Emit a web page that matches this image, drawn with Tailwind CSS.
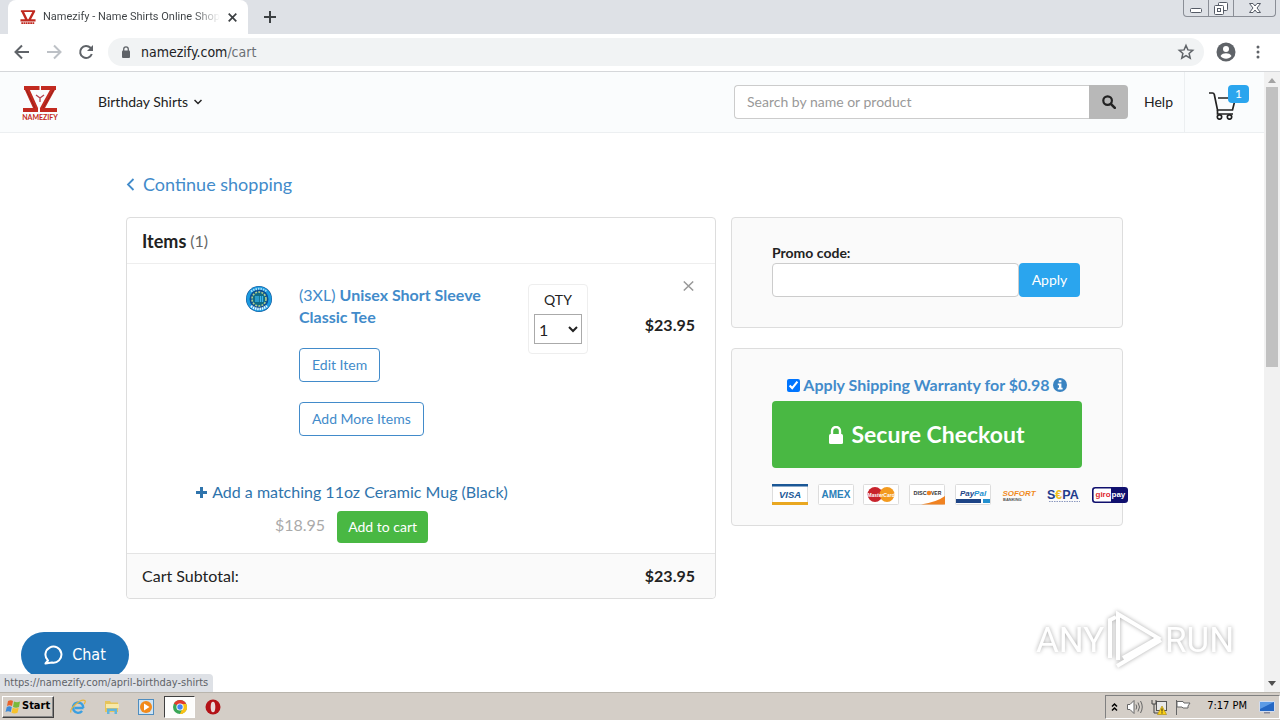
<!DOCTYPE html>
<html lang="en">
<head>
<meta charset="utf-8">
<meta name="viewport" content="width=device-width, initial-scale=1">
<title>Namezify - Name Shirts Online Shopping</title>
<script src="https://cdn.jsdelivr.net/npm/@tailwindcss/browser@4"></script>
</head>
<body class="flex h-screen flex-col overflow-hidden bg-white font-['Lato','Liberation_Sans',sans-serif] text-[#222]">

<!-- Tab strip -->
<div class="flex h-[34px] shrink-0 items-start justify-between bg-[#dee1e6]">
  <div class="flex h-full items-center pl-2">
    <div class="flex h-full w-60 items-center rounded-t-lg bg-white pr-2 pl-3">
      <svg class="h-4 w-4 shrink-0" viewBox="0 0 36 36"><path d="M2 3h32v4H2zM3 6h6l9 19h-6zM28 6h6L24 25h-6zM1 23h34v5H1z" fill="#c0281f"/><path d="M3 32h30" stroke="#c0281f" stroke-width="4" stroke-dasharray="4 1"/></svg>
      <span class="ml-[7px] flex-1 overflow-hidden bg-linear-to-r from-[#3c4043] from-85% to-transparent bg-clip-text font-[Roboto,sans-serif] text-[11px] whitespace-nowrap text-transparent">Namezify - Name Shirts Online Shopping</span>
      <button aria-label="Close tab" class="ml-1 flex h-4 w-4 items-center justify-center"><svg class="h-[9px] w-[9px]" viewBox="0 0 9 9" stroke="#3c4043" stroke-width="1.7"><path d="M.7.7l7.6 7.6M8.3.7L.7 8.3"/></svg></button>
    </div>
    <button aria-label="New tab" class="ml-4 flex h-4 w-3 items-center"><svg class="h-3 w-3" viewBox="0 0 12 12" stroke="#3c4043" stroke-width="2"><path d="M6 0v12M0 6h12"/></svg></button>
  </div>
  <div class="mr-1 flex h-[17px] overflow-hidden rounded-b border border-t-0 border-[#8a8e96]">
    <button aria-label="Minimize" class="flex w-[25px] items-center justify-center border-r border-[#8a8e96]"><svg class="h-4 w-4" viewBox="0 0 16 16" fill="#fff" stroke="#555b66"><rect x="2.500" y="8.500" width="11" height="4" rx="1"/></svg></button>
    <button aria-label="Restore" class="flex w-[25px] items-center justify-center border-r border-[#8a8e96]"><svg class="h-4 w-4" viewBox="0 0 16 16" fill="#fff" stroke="#555b66"><rect x="5.500" y="2.500" width="9" height="8" rx="1"/><rect x="1.500" y="5.500" width="9" height="9" rx="1"/><rect x="4.500" y="8.500" width="3" height="3"/></svg></button>
    <button aria-label="Close" class="flex w-[41px] items-center justify-center"><svg class="h-4 w-4" viewBox="0 0 16 16" fill="#fff" stroke="#555b66"><path d="M2.500 3.500h3.500l2 2.500 2-2.500h3.500L10 8l3.500 4.500H10L8 10l-2 2.500H2.500L6 8z"/></svg></button>
  </div>
</div>

<!-- Address bar -->
<div class="flex h-[38px] shrink-0 items-center border-b border-[#d5d7da] bg-white pr-5 pb-0.5 pl-3 font-['DejaVu_Sans_Condensed','DejaVu_Sans',sans-serif]">
  <button aria-label="Back" class="mr-3"><svg class="h-5 w-5" viewBox="0 0 20 20" fill="none" stroke="#5f6368" stroke-width="2"><path d="M17 10H4M10 3.500L3.500 10l6.500 6.500"/></svg></button>
  <button aria-label="Forward" class="mr-3"><svg class="h-5 w-5" viewBox="0 0 20 20" fill="none" stroke="#bdc1c6" stroke-width="2"><path d="M3 10h13M10 3.500l6.500 6.500-6.500 6.500"/></svg></button>
  <button aria-label="Reload" class="mr-3"><svg class="h-5 w-5" viewBox="0 0 20 20" fill="none" stroke="#5f6368" stroke-width="2"><path d="M15.800 12A6 6 0 1 1 14.500 5.800L16 7.300"/><path d="M17 3v6h-6z" fill="#5f6368" stroke="none"/></svg></button>
  <div class="flex h-7 flex-1 items-center rounded-full bg-[#f1f3f4] pr-2 pl-[13px]">
    <svg class="h-3 w-[10px]" viewBox="0 0 10 12"><rect x="1" y="4.500" width="8" height="7.500" rx="1" fill="#5f6368"/><path d="M2.700 5V3.200a2.300 2.300 0 0 1 4.600 0V5" fill="none" stroke="#5f6368" stroke-width="1.300"/></svg>
    <span class="ml-[10px] flex-1 text-sm text-[#202124]">namezify.com<span class="text-[#6b7075]">/cart</span></span>
    <button aria-label="Bookmark"><svg class="h-5 w-5" viewBox="0 0 20 20" fill="none" stroke="#5f6368" stroke-width="1.500"><path d="M10 3.500l1.900 4.400 4.800.4-3.600 3.100 1.100 4.700-4.200-2.500-4.200 2.500 1.100-4.700-3.600-3.100 4.800-.4z"/></svg></button>
  </div>
  <button aria-label="Profile" class="ml-3"><svg class="h-5 w-5" viewBox="0 0 20 20"><circle cx="10" cy="10" r="9.500" fill="#5f6368"/><circle cx="10" cy="7" r="3" fill="#fff"/><path d="M4.500 14c1-2 3.500-2.700 5.500-2.700s4.500.7 5.500 2.700c-1.300 1.800-3.300 2.800-5.500 2.800S5.800 15.800 4.500 14z" fill="#fff"/></svg></button>
  <button aria-label="Menu" class="ml-5"><svg class="h-4 w-1" viewBox="0 0 4 16" fill="#5f6368"><circle cx="2" cy="3" r="1.500"/><circle cx="2" cy="8" r="1.500"/><circle cx="2" cy="13" r="1.500"/></svg></button>
</div>

<div class="relative flex min-h-0 flex-1">
  <div class="min-w-0 flex-1 overflow-hidden">
    <!-- Site header -->
    <header class="flex h-[61px] items-center border-b border-[#eceff1] bg-[#fafcfd] text-sm">
      <a href="#" aria-label="Namezify home" class="ml-[22px]"><svg class="h-[38px] w-9" viewBox="0 0 36 38"><path d="M2 3h32v4H2zM2 5h5l9 20h-5zM29 5h5L23 25h-5zM1 25h15v4H1zM18 25h17v4H18z" fill="#c22a20"/><path d="M4.500 7l8.500 18M31.500 7L21 25" stroke="#96201a" stroke-width="1"/><path d="M17.500 3h1.500v4h-1.500z" fill="#fafcfd"/><path d="M14 12l4 3 4-3M18 15v4" fill="none" stroke="#b4424f" stroke-width="1.300"/><text x="18" y="37" text-anchor="middle" font-family="Lato" font-weight="700" font-size="7" fill="#c42a20">NAMEZIFY</text></svg></a>
      <button class="ml-10 flex items-center gap-1">Birthday Shirts<svg class="ml-0.5 h-2 w-2" viewBox="0 0 8 8" fill="none" stroke="#222" stroke-width="1.500"><path d="M.5 2l3.500 3.500L7.500 2"/></svg></button>
      <form class="ml-auto flex h-[34px] w-[394px]">
        <input aria-label="Search" placeholder="Search by name or product" class="min-w-0 flex-1 rounded-l border border-r-0 border-[#ccc] bg-white px-3 text-sm placeholder:text-[#999]">
        <button type="button" aria-label="Search" class="flex w-[39px] items-center justify-center rounded-r bg-[#b8b8b8]"><svg class="h-[14px] w-[14px]" viewBox="0 0 14 14" fill="none" stroke="#222"><circle cx="5.600" cy="5.600" r="4.300" stroke-width="2.200"/><path d="M8.800 8.800l4 4" stroke-width="2.600" stroke-linecap="round"/></svg></button>
      </form>
      <a href="#" class="ml-4 w-10">Help</a>
      <a href="#" aria-label="Cart, 1 item" class="relative flex h-full w-20 items-center border-l border-[#eceff1] pt-2 pl-6">
        <svg class="h-7 w-7" viewBox="0 0 28 28" fill="none" stroke="#222" stroke-width="1.700"><path d="M0 1h3.500c1 0 1.500.5 1.800 1.500L8.500 18h15L26.500 6M9 6h11"/><path d="M8.500 18v4h15.500"/><circle cx="10.500" cy="25" r="2.200"/><circle cx="20.500" cy="25" r="2.200"/></svg>
        <span class="absolute top-[13px] left-[43px] h-[18px] w-[21px] rounded-sm bg-[#2aa5ee] text-center text-xs leading-[18px] text-white">1</span>
      </a>
    </header>

    <!-- Cart -->
    <main class="pt-[39px] pr-[141px] pl-[126px]">
      <a href="#" class="flex h-6 w-fit items-center gap-2 text-lg text-[#428bca]"><svg class="h-[13px] w-[9px]" viewBox="0 0 9 13" fill="none" stroke="#428bca" stroke-width="1.800"><path d="M7.500 1L2 6.500 7.500 12"/></svg>Continue shopping</a>
      <div class="mt-[21px] grid grid-cols-[minmax(0,590fr)_minmax(0,392fr)] items-start gap-[15px]">
        <section class="rounded border border-[#ddd]">
          <h1 class="flex h-[46px] items-center gap-1 border-b border-[#eee] px-[15px] text-lg font-bold">Items <span class="text-base font-normal text-[#666]">(1)</span></h1>
          <div class="flex items-start pt-5 pr-5 pl-[119px]">
            <svg class="mt-0.5 h-[26px] w-[26px] shrink-0" viewBox="0 0 26 26"><circle cx="13" cy="13" r="13" fill="#0b4f93"/><circle cx="13" cy="13" r="11" fill="none" stroke="#1c9be0" stroke-width="3"/><path d="M5 5.500Q13 0 21 5.500" fill="none" stroke="#a8dcf5" stroke-width="2" stroke-dasharray="1.500 1"/><circle cx="13" cy="13" r="7" fill="#0f6b86" stroke="#b7d08a" stroke-width="1.600" stroke-dasharray="2 1.200"/><path d="M10 10v6M12 10v6M14.500 10v6M16.500 10v6" stroke="#3cb6ef" stroke-width="1.300"/><path d="M5 20Q13 26 21 20" fill="none" stroke="#e8f6ff" stroke-width="2.600" stroke-dasharray="1.500 .8"/></svg>
            <div class="ml-[27px] w-[229px] shrink-0 text-[#428bca]">
              <a href="#" class="block w-[200px] text-base leading-[22px]">(3XL) <b>Unisex Short Sleeve Classic Tee</b></a>
              <button class="mt-5 block h-[34px] rounded border border-[#428bca] px-3 text-sm">Edit Item</button>
              <button class="mt-5 block h-[34px] rounded border border-[#428bca] px-3 text-sm">Add More Items</button>
            </div>
            <div class="flex h-[70px] w-[60px] shrink-0 flex-col items-center rounded border border-[#eee] pt-[5px]">
              <label for="qty" class="text-sm leading-5">QTY</label>
              <select id="qty" class="mt-1 h-[30px] w-12 border border-[#aaa] bg-white text-base"><option>1</option></select>
            </div>
            <div class="flex flex-1 flex-col items-end">
              <button aria-label="Remove item" class="mt-[-3px] h-[10px] pr-px"><svg class="h-[10px] w-[11px]" viewBox="0 0 11 10" stroke="#999" stroke-width="1.500"><path d="M.8.5l9.400 9M10.200.5l-9.400 9"/></svg></button>
              <span class="mt-[23px] text-base leading-[22px] font-bold">$23.95</span>
            </div>
          </div>
          <div class="mt-[45px] flex w-[449px] flex-col items-center pb-[10px]">
            <a href="#" class="flex items-center gap-1 text-base leading-[22px] text-[#2f74ac]"><svg class="h-[11px] w-[13px]" viewBox="0 0 12 11" stroke="#2f74ac" stroke-width="3"><path d="M6 0v11M.5 5.500h11"/></svg>Add a matching 11oz Ceramic Mug (Black)</a>
            <div class="mt-2 flex items-center gap-3"><span class="pb-1 text-base text-[#aaa]">$18.95</span><button class="h-8 rounded bg-[#49b843] px-[11px] text-sm text-white">Add to cart</button></div>
          </div>
          <div class="flex h-[45px] items-center justify-between rounded-b border-t border-[#e4e4e4] bg-[#fafafa] pr-5 pl-[15px] text-base"><span>Cart Subtotal:</span><b>$23.95</b></div>
        </section>

        <aside class="flex flex-col gap-5">
          <form class="rounded border border-[#ddd] bg-[#fafafa] px-10 pt-[25px] pb-[30px]">
            <label for="promo" class="block text-sm leading-5 font-bold">Promo code:</label>
            <div class="flex h-[34px]"><input id="promo" class="w-[247px] rounded border border-[#ccc] bg-white px-3"><button type="button" class="w-[61px] rounded bg-[#2aa5ee] text-sm text-white">Apply</button></div>
          </form>
          <section class="rounded border border-[#ddd] bg-[#fafafa] px-10 pt-6 pb-5">
            <div class="mb-1 flex h-6 items-center justify-center text-base font-bold text-[#428bca]"><input id="warranty" type="checkbox" checked class="mr-[3px] h-[13px] w-[13px]"><label for="warranty">Apply Shipping Warranty for $0.98</label><svg class="ml-[3px] h-[14px] w-[14px]" viewBox="0 0 14 14"><circle cx="7" cy="7" r="7" fill="#3a83c1"/><path d="M5.800 2.300h2.600v2H5.800zM4.800 5.500h3.600v4.300h1.200v1.700H4.800V9.800H6V7.200H4.800z" fill="#fff"/></svg></div>
            <button class="flex h-[67px] w-full items-center justify-center gap-2 rounded bg-[#49b843] text-[23px] font-bold text-white"><svg class="h-[18px] w-[14px]" viewBox="0 0 14 18"><rect y="8" width="14" height="10" rx="1.500" fill="#fff"/><path d="M3 9V5a4 4 0 0 1 8 0v4" fill="none" stroke="#fff" stroke-width="2.400"/></svg>Secure Checkout</button>
            <div class="mt-4 flex w-[356px] justify-between">
              <svg class="h-[21px] w-9" viewBox="0 0 36 21"><rect x=".5" y=".5" width="35" height="20" rx="1" fill="#fff" stroke="#ddd"/><path d="M0 0h36v2.500H0z" fill="#1a5796"/><path d="M0 18h36v3H0z" fill="#e9a720"/><text x="18" y="14" text-anchor="middle" font-family="Liberation Sans" font-style="italic" font-weight="700" font-size="9.500" fill="#1a5796">VISA</text></svg>
              <svg class="h-[21px] w-9" viewBox="0 0 36 21"><rect x=".5" y=".5" width="35" height="20" rx="1" fill="#fff" stroke="#ddd"/><text x="18" y="14" text-anchor="middle" font-family="Liberation Sans" font-weight="700" font-size="10" fill="#2b80b8">AMEX</text></svg>
              <svg class="h-[21px] w-9" viewBox="0 0 36 21"><rect x=".5" y=".5" width="35" height="20" rx="1" fill="#fff" stroke="#ddd"/><circle cx="12" cy="10.500" r="7.500" fill="#c8232c"/><circle cx="24" cy="10.500" r="7.500" fill="#f39a1e"/><text x="18" y="13" text-anchor="middle" font-family="Liberation Sans" font-style="italic" font-weight="700" font-size="5" fill="#fff">MasterCard</text></svg>
              <svg class="h-[21px] w-9" viewBox="0 0 36 21"><rect x=".5" y=".5" width="35" height="20" rx="1" fill="#fff" stroke="#ddd"/><path d="M12 20.500Q28 18 36 12v8.500z" fill="#f08221"/><circle cx="20" cy="9" r="2.300" fill="#f08221"/><text x="4.500" y="11" font-family="Liberation Sans" font-weight="700" font-size="5.500" fill="#333">DISC</text><text x="22" y="11" font-family="Liberation Sans" font-weight="700" font-size="5" fill="#333">VER</text></svg>
              <svg class="h-[21px] w-9" viewBox="0 0 36 21"><rect x=".5" y=".5" width="35" height="20" rx="1" fill="#fff" stroke="#ddd"/><path d="M1 15h25v4H1z" fill="#1d4486"/><path d="M28 15h7v4h-7z" fill="#2490cf"/><text x="18" y="12" text-anchor="middle" font-family="Liberation Sans" font-style="italic" font-weight="700" font-size="8" fill="#1d4486">Pay<tspan fill="#2490cf">Pal</tspan></text></svg>
              <svg class="h-[21px] w-9" viewBox="0 0 36 21"><text x="18" y="12" text-anchor="middle" font-family="Liberation Sans" font-style="italic" font-weight="700" font-size="8" fill="#f08a1d">SOFORT</text><text x="2" y="16.500" font-family="Liberation Sans" font-weight="700" font-size="4" fill="#555">BANKING</text></svg>
              <svg class="h-[21px] w-9" viewBox="0 0 36 21"><text x="1" y="15" font-family="Liberation Sans" font-weight="700" font-size="12.500" fill="#1f3c8c">S<tspan fill="#f0c020">€</tspan>PA</text><path d="M3 17.500h31" stroke="#8b98bf" stroke-dasharray="1.500 1"/></svg>
              <svg class="h-[21px] w-9" viewBox="0 0 36 21"><rect x=".8" y="3.800" width="34.400" height="14.400" rx="2.500" fill="#fff" stroke="#10106e" stroke-width="1.600"/><path d="M19 4h14a2.500 2.500 0 0 1 2.500 2.500v9A2.500 2.500 0 0 1 33 18H19z" fill="#10106e"/><text x="3.500" y="13" font-family="Liberation Sans" font-weight="700" font-size="8" fill="#e02a2f">giro</text><text x="19.500" y="13" font-family="Liberation Sans" font-weight="700" font-size="8" fill="#fff">pay</text></svg>
            </div>
          </section>
        </aside>
      </div>
    </main>
  </div>

  <!-- Scrollbar -->
  <div class="flex w-4 shrink-0 flex-col items-center justify-between bg-[#f1f1f1] py-[6px]">
    <svg class="h-[5px] w-2" viewBox="0 0 8 5"><path d="M0 5l4-5 4 5z" fill="#a3a3a3"/></svg>
    <div class="mt-1 mb-auto h-[280px] w-3 bg-[#c1c1c1]"></div>
    <svg class="h-[5px] w-2" viewBox="0 0 8 5"><path d="M0 0l4 5 4-5z" fill="#505050"/></svg>
  </div>

  <!-- Overlays -->
  <button class="absolute bottom-[14px] left-[21px] flex h-[46px] w-[108px] items-center justify-center gap-2 rounded-full bg-[#1f73b7] font-['DejaVu_Sans_Condensed','DejaVu_Sans',sans-serif] text-base text-white"><svg class="h-5 w-5" viewBox="0 0 20 20" fill="none" stroke="#fff" stroke-width="2"><path d="M4 15.500A8 8 0 1 1 8 17.500L1.500 18.500z" stroke-linejoin="round"/></svg>Chat</button>
  <div class="absolute bottom-0 left-0 h-[18px] w-[213px] rounded-tr-sm bg-[#dee1e6] pl-1 font-['DejaVu_Sans_Condensed','DejaVu_Sans',sans-serif] text-[11px] leading-[18px] whitespace-nowrap text-[#5f6368]">https://namezify.com/april-birthday-shirts</div>
  <svg class="absolute right-[42px] bottom-[18px] h-[68px] w-[208px] drop-shadow-[0_0_2px_#aaa]" viewBox="0 0 208 68" fill="none" stroke="#fff">
    <g fill="#fff" stroke="none" font-family="Roboto,sans-serif" font-size="35"><text x="6" y="46">ANY</text><text x="135" y="46">RUN</text></g>
    <path d="M80 52V14l6-3M88 54V8l40 24-35 20M87 60l44-26" stroke-width="4"/>
  </svg>
</div>

<!-- Taskbar -->
<footer class="flex h-7 shrink-0 items-center border-t border-[#b9b5ad] bg-[#d4cec7] pl-0.5 font-['DejaVu_Sans_Condensed','DejaVu_Sans',sans-serif] text-[11px] text-black">
  <button class="flex h-[22px] w-[52px] items-center gap-px border border-t-white border-r-[#404040] border-b-[#404040] border-l-white pl-0.5 font-bold shadow-[inset_-1px_-1px_#888]"><svg class="h-4 w-4 shrink-0" viewBox="0 0 16 16"><path d="M3 2q3-1.500 5 0L7 7Q4.500 5.500 2 7z" fill="#e8632b"/><path d="M9 2.500q3 1.500 6 0L14 8q-3 1.500-6 0z" fill="#7ab93b"/><path d="M1.800 8q2.500-1.500 5 0l-1 5Q3 11.500.5 13z" fill="#3d8ad8"/><path d="M7.700 8.700q3 1.500 6 0l-1.200 5q-3 1.500-6 0z" fill="#f6c22d"/></svg>Start</button>
  <div class="ml-4 flex items-center">
    <button aria-label="Internet Explorer" class="mr-[18px]"><svg class="h-4 w-4" viewBox="0 0 16 16" fill="none"><path d="M13.500 9H4.500M13.300 9a5.200 5.200 0 1 0-1.200 3" stroke="#3b9fe0" stroke-width="2.400"/><path d="M1 13.500C-1 10 11-1 14.800 1.500c.9.700.2 2.500-.8 3.500" stroke="#e8b53a" stroke-width="1.200"/></svg></button>
    <button aria-label="Explorer" class="mr-[18px]"><svg class="h-4 w-4" viewBox="0 0 16 16"><path d="M1 2h5l1 1.500h7V13H1z" fill="#e6c45a"/><path d="M2 5h13v4H2z" fill="#f8e9a8"/><path d="M3 15V9.500h10V15h-2.500v-3h-5v3z" fill="#62b5dd"/></svg></button>
    <button aria-label="Media Player" class="mr-[10px]"><svg class="h-4 w-4" viewBox="0 0 16 16"><rect x=".5" y=".5" width="15" height="15" fill="#cfe4f4" stroke="#4f8dbf"/><circle cx="8" cy="8" r="6" fill="#f28a1b"/><path d="M6 4.500l5.500 3.500L6 11.500z" fill="#fff"/></svg></button>
    <button aria-label="Chrome" class="mr-[10px] flex h-[22px] w-[31px] items-center justify-center border border-t-[#404040] border-r-white border-b-white border-l-[#404040] bg-[#fdfdfc]"><svg class="h-4 w-4" viewBox="0 0 16 16"><circle cx="8" cy="8" r="7" fill="#3aa757"/><path d="M8 8L1.900 4.500A7 7 0 0 1 14.100 4.500z" fill="#e33b2e"/><path d="M8 8h7a7 7 0 0 1-7 7l3.500-6z" fill="#fbc116"/><path d="M8 5h6.300A7 7 0 0 1 8 15l2.600-5.500z" fill="#fbc116"/><circle cx="8" cy="8" r="3.600" fill="#fff"/><circle cx="8" cy="8" r="2.700" fill="#4285f4"/></svg></button>
    <button aria-label="Opera"><svg class="h-4 w-4" viewBox="0 0 16 16"><circle cx="8" cy="8" r="7.500" fill="#b31217"/><ellipse cx="8" cy="8" rx="2.300" ry="5.300" fill="#e8dada"/></svg></button>
  </div>
  <div class="ml-auto flex h-6 items-center border border-t-[#808080] border-r-white border-b-white border-l-[#808080] px-1">
    <svg class="h-[10px] w-[9px]" viewBox="0 0 9 10" fill="none" stroke="#000" stroke-width="1.500"><path d="M2 4.500l2.500-2.500L7 4.500M2 8.500L4.500 6 7 8.500"/></svg>
    <svg class="ml-2 h-4 w-4" viewBox="0 0 16 16" fill="#fff" stroke="#666"><path d="M.5 5.500H3l4-4v13l-4-4H.5z"/><path d="M9 5.500q1.500 2.500 0 5M11 3.500q3 4.500 0 9M13.500 2q3.500 6 0 12" fill="none"/></svg>
    <svg class="ml-2 h-4 w-4" viewBox="0 0 16 16"><rect x="5.500" y="2.500" width="10" height="9" fill="#e8e8e8" stroke="#555"/><path d="M1 1v4h4V1M3 5v9h4" fill="none" stroke="#444"/><path d="M11 7l4.500 8.500h-9z" fill="#fbd116" stroke="#a98500" stroke-width=".6"/><path d="M11 9.500v3M11 13.300v1.200" stroke="#222"/></svg>
    <svg class="ml-2 h-4 w-4" viewBox="0 0 16 16" fill="#fff" stroke="#666"><path d="M1.500 1v15M2 2.500h6l1 1.500h6l-2 3 0 2H8l-1-1H2z"/></svg>
    <span class="ml-4">7:17 PM</span>
    <svg class="ml-3 h-[14px] w-4" viewBox="0 0 16 14"><path d="M.5 1.500h15v10H.5z" fill="#2467c4" stroke="#d3dced"/><path d="M1 2h14L1 9z" fill="#5c9be6"/><path d="M5 12h6v1.500H5z" fill="#889"/></svg>
  </div>
</footer>
</body>
</html>
